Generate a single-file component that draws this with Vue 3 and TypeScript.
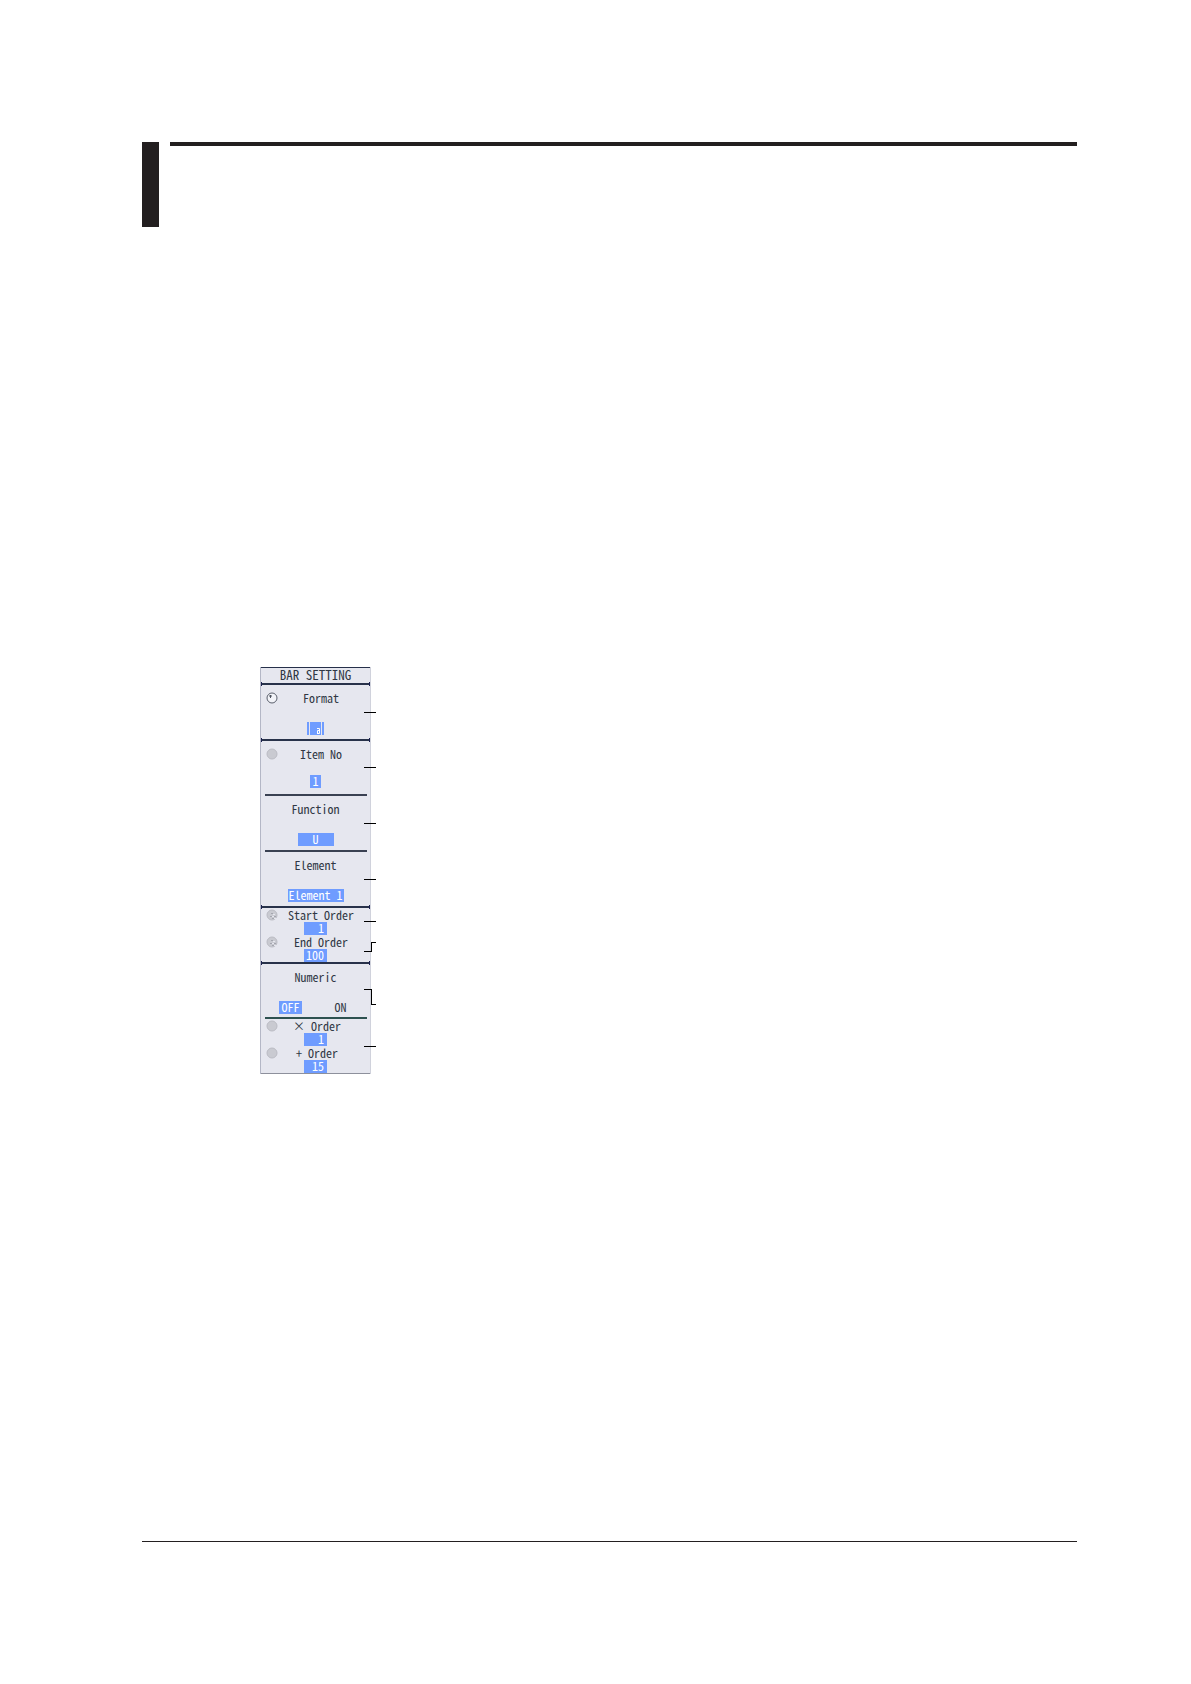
<script setup lang="ts">
import { ref } from 'vue'

interface OrderField {
  id: string
  label: string
  value: string
}

const range = ref<OrderField[]>([
  { id: 'start', label: 'Start Order', value: '1' },
  { id: 'end', label: 'End Order', value: '100' },
])
const cursors = ref<OrderField[]>([
  { id: 'cursor-x', label: '× Order', value: '1' },
  { id: 'cursor-plus', label: '+ Order', value: '15' },
])
const itemNo = ref('1')
const numeric = ref(false)
</script>

<template>
  <main class="page">
    <header class="head">
      <div class="tab"></div>
      <div class="rule"></div>
    </header>

    <section class="figure">
      <div class="panel">
        <h1 class="title">BAR SETTING</h1>

        <div class="keys">
          <button type="button" class="key full">
            <span class="row">
              <svg class="knob" viewBox="0 0 12 12">
                <circle cx="6" cy="6" r="5" fill="#f2f3f8" stroke="#5a5f6c" />
                <path d="M3 4h3M4.500 3v3" fill="none" stroke="#4b505c" />
              </svg>
              <span class="name">Format</span>
            </span>
            <svg class="bars" viewBox="0 0 17 13">
              <path d="M0 0h2v13H0zM3 0h11v13H3zM15 0h2v13h-2z" fill="#6f9cff" />
              <path d="M10.500 11V8.500h2M10 6.500h2.500V11.500H10" fill="none" stroke="#fff" />
            </svg>
          </button>

          <div class="key full">
            <div class="row">
              <svg class="knob" viewBox="0 0 12 12"><circle cx="6" cy="6" r="5" fill="#c9cad1" stroke="#bbbcc4" /></svg>
              <label class="name" for="item">Item No</label>
            </div>
            <input id="item" v-model="itemNo" class="value tiny" />
          </div>

          <button type="button" class="key">
            <span class="plain">Function</span>
            <span class="value mid">U</span>
          </button>

          <button type="button" class="key">
            <span class="plain">Element</span>
            <span class="value wide">Element 1</span>
          </button>

          <div class="key full pair">
            <div v-for="f in range" :key="f.id" class="order">
              <div class="row">
                <svg class="knob" viewBox="0 0 12 12">
                  <circle cx="6" cy="6" r="5" fill="#c9cad1" stroke="#bbbcc4" />
                  <path d="M4 7.500h2M8 7.500h2M6 9.500h2M5 4.500h2" stroke="#a4a6af" />
                  <path d="M6 7.500h2M8 9.500h2M7 5.500h2" stroke="#e6e7ef" />
                </svg>
                <label class="name" :for="f.id">{{ f.label }}</label>
              </div>
              <input :id="f.id" v-model="f.value" class="value num" />
            </div>
          </div>

          <button type="button" class="key full" @click="numeric = !numeric">
            <span class="plain">Numeric</span>
            <span class="switch">
              <span class="state" :class="{ on: !numeric }">OFF</span>
              <span class="state" :class="{ on: numeric }">ON</span>
            </span>
          </button>

          <div class="key pair green">
            <div v-for="f in cursors" :key="f.id" class="order">
              <div class="row">
                <svg class="knob" viewBox="0 0 12 12"><circle cx="6" cy="6" r="5" fill="#c9cad1" stroke="#bbbcc4" /></svg>
                <label class="name" :for="f.id">{{ f.label }}</label>
              </div>
              <input :id="f.id" v-model="f.value" class="value num" />
            </div>
          </div>
        </div>
      </div>

      <svg class="leaders" viewBox="0 0 12 406" shape-rendering="crispEdges">
        <path
          d="M0 45.500H12M0 100.500H12M0 156.500H12M0 212.500H12M0 254.500H12M0 284.500H7.500V275.500H12M0 322.500H7.500V337.500H12M0 379.500H12"
          fill="none"
          stroke="#000"
        />
      </svg>
    </section>

    <footer class="foot"></footer>
  </main>
</template>

<style>
body {
  margin: 0;
  background: #fff;
}
</style>

<style scoped>
.page {
  box-sizing: border-box;
  padding: 142px 114px 142px 142px;
  font-family: "Noto Sans Mono CJK JP", "Noto Sans CJK JP", "Liberation Mono", monospace;
  font-size: 12px;
  line-height: 14px;
  color: #303744;
}
.head {
  display: flex;
  gap: 11px;
}
.tab {
  width: 17px;
  height: 85px;
  background: #231f20;
}
.rule {
  flex: 1;
  height: 4px;
  background: #231f20;
}
.figure {
  position: relative;
  width: 116px;
  margin: 440px 0 0 118px;
}
.panel {
  box-sizing: border-box;
  width: 111px;
  border-left: 1px solid #b4b7c6;
  border-right: 1px solid #d0d2dc;
  background: #e6e7ef;
}
.title {
  box-sizing: border-box;
  height: 16px;
  margin: 0;
  border-top: 1px solid #26304a;
  font-size: 13px;
  font-weight: 400;
  line-height: 14px;
  text-align: center;
}
.keys {
  display: grid;
  grid-template-rows: repeat(7, minmax(0, 1fr));
  height: 390px;
  border-bottom: 1px solid #8d909c;
}
.key {
  position: relative;
  display: flex;
  flex-direction: column;
  align-items: center;
  justify-content: flex-start;
  box-sizing: border-box;
  margin: 0;
  padding: 8px 0 0;
  border: 0;
  background: none;
  color: inherit;
  font: inherit;
}
.key::before {
  content: "";
  position: absolute;
  top: 0;
  left: 4px;
  right: 3px;
  height: 2px;
  background: #3a4152;
}
.key.full::before {
  left: 0;
  right: 0;
  background: #28324a;
}
.key.full::after {
  content: "";
  position: absolute;
  top: -1px;
  left: 0;
  right: 0;
  height: 4px;
  border: solid #1c2150;
  border-width: 0 1px;
}
.key.green::before {
  background: #2d5150;
}
.row {
  display: flex;
  align-items: center;
  align-self: stretch;
  height: 14px;
  padding: 0 6px 0 5px;
}
.green .row {
  padding-right: 14px;
}
.knob {
  width: 12px;
  height: 12px;
}
.name {
  flex: 1;
  text-align: center;
  white-space: nowrap;
}
.value {
  box-sizing: border-box;
  height: 13px;
  margin: 17px 0 0;
  padding: 0;
  border: 0;
  background: #6f9cff;
  color: #fff;
  font: inherit;
  line-height: 12px;
  text-align: center;
  white-space: nowrap;
}
.bars {
  width: 17px;
  height: 13px;
  margin-top: 17px;
}
.tiny {
  width: 11px;
  margin-top: 14px;
  padding-bottom: 2px;
}
.mid {
  width: 36px;
}
.wide {
  width: 56px;
}
.pair {
  padding-top: 2px;
}
.order {
  display: flex;
  flex-direction: column;
  align-items: center;
  align-self: stretch;
  height: 28px;
}
.num {
  width: 23px;
  margin: 0;
  padding: 0 3px 2px 0;
  text-align: right;
}
.switch {
  display: flex;
  justify-content: space-between;
  align-self: stretch;
  margin-top: 17px;
  padding: 0 18px;
}
.state {
  width: 23px;
  height: 13px;
  line-height: 12px;
}
.state.on {
  background: #6f9cff;
  color: #fff;
}
.leaders {
  position: absolute;
  top: 0;
  right: 0;
  width: 12px;
  height: 406px;
}
.foot {
  margin-top: 467px;
  border-top: 1px solid #231f20;
}
</style>
